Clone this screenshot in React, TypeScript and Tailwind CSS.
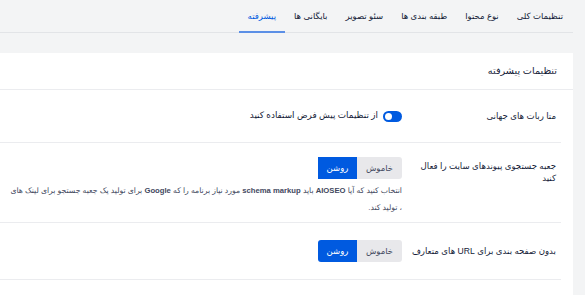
import React from 'react';

const tabs = ['تنظیمات کلی', 'نوع محتوا', 'طبقه بندی ها', 'سئو تصویر', 'بایگانی ها', 'پیشرفته'];

function OnOff() {
  return (
    <div className="flex h-[22px] overflow-hidden rounded-[3px] text-[8.5px]">
      <button type="button" className="w-[45px] bg-[#e8e8eb] text-[#434960]">
        خاموش
      </button>
      <button type="button" className="w-[39px] bg-[#005ae0] text-white">
        روشن
      </button>
    </div>
  );
}

export default function App() {
  return (
    <div
      dir="rtl"
      className="h-[295px] w-[585px] overflow-hidden bg-[#f3f4f5] text-[#141b38]"
      style={{ fontFamily: '"Liberation Sans", "DejaVu Sans", sans-serif' }}
    >
      <div className="mr-[12px]">
        {/* tabs */}
        <div className="flex h-[33px] border-b border-[#e2e4e7] pr-[1px] text-[8.5px]">
          {tabs.map((tab) => {
            const active = tab === 'پیشرفته';
            return (
              <div
                key={tab}
                className={`-mb-px flex items-center px-[9px] pt-[2px] ${
                  active ? 'border-b-2 border-[#5b8fe6] text-[#005ae0]' : 'border-b-2 border-transparent'
                }`}
              >
                {tab}
              </div>
            );
          })}
        </div>

        {/* card */}
        <div className="mt-[20px] bg-white">
          <div className="flex h-[37px] items-center border-b border-[#ebecef] pr-[16px] text-[9.7px]">
            تنظیمات پیشرفته
          </div>

          <div className="mr-[12px]">
            <div className="flex h-[53px] items-center border-b border-[#ebecef] pr-[5px]">
              <div className="w-[140px] shrink-0 whitespace-nowrap text-[8.6px]">متا ربات های جهانی</div>
              <div className="mr-[14px] flex items-center gap-[5px] text-[8.8px]">
                <span className="flex h-[11px] w-[19px] items-center justify-end rounded-full bg-[#005ae0] px-[2px]">
                  <span className="h-[7px] w-[7px] rounded-full bg-white" />
                </span>
                <span>از تنظیمات پیش فرض استفاده کنید</span>
              </div>
            </div>

            <div className="flex h-[80px] items-start border-b border-[#ebecef] pr-[5px] pt-[14px]">
              <div className="w-[140px] shrink-0 whitespace-nowrap pt-[3px] text-[8.6px] leading-[12px]">
                جعبه جستجوی پیوندهای سایت را فعال
                <br />
                کنید
              </div>
              <div className="mr-[14px] flex-1">
                <OnOff />
                <p className="mt-[3px] whitespace-nowrap text-[7.7px] leading-[17px] text-[#434960]">
                  انتخاب کنید که آیا <b className="font-bold">AIOSEO</b> باید{' '}
                  <b className="font-bold">schema markup</b> مورد نیاز برنامه را که{' '}
                  <b className="font-bold">Google</b> برای تولید یک جعبه جستجو برای لینک های
                  <br />، تولید کند.
                </p>
              </div>
            </div>

            <div className="flex h-[57px] items-center border-b border-[#ebecef] pr-[5px]">
              <div className="w-[140px] shrink-0 whitespace-nowrap text-[8.6px]">بدون صفحه بندی برای URL های متعارف</div>
              <div className="mr-[14px]">
                <OnOff />
              </div>
            </div>
          </div>
          <div className="h-[20px]" />
        </div>
      </div>
    </div>
  );
}
